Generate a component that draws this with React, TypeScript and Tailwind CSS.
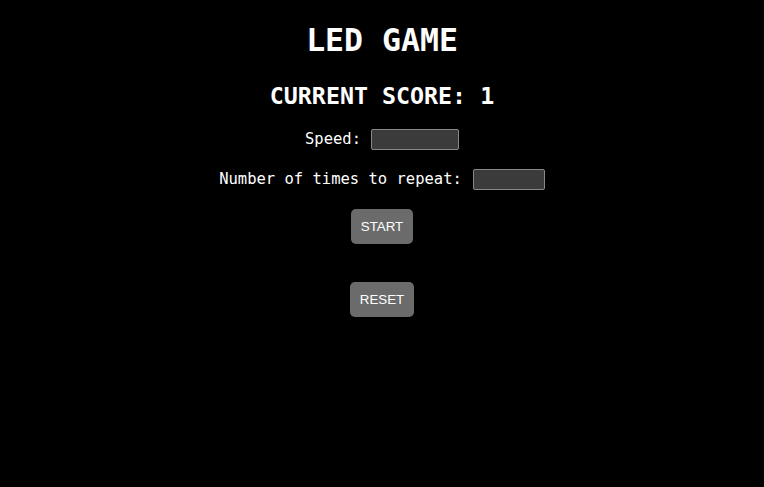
export default function App() {
  return (
    <div className="min-h-[487px] w-full bg-black text-white flex flex-col items-center" style={{ fontFamily: '"DejaVu Sans Mono", monospace' }}>
      <h1 className="mt-[21px] text-[31.5px] leading-[38px] font-bold">LED GAME</h1>
      <h2 className="mt-[23px] text-[23.3px] leading-[28px] font-bold">CURRENT SCORE: 1</h2>
      <div className="mt-[19px] flex items-center h-[21px] text-[15.5px]">
        <span>Speed:</span>
        <span className="inline-block w-[10px]" />
        <div className="w-[88px] h-[21px] bg-[#3b3b3b] border border-[#888] rounded-[2px]" />
      </div>
      <div className="mt-[19px] flex items-center h-[21px] text-[15.5px]">
        <span>Number of times to repeat:</span>
        <span className="inline-block w-[11px]" />
        <div className="w-[72px] h-[21px] bg-[#3b3b3b] border border-[#888] rounded-[2px]" />
      </div>
      <button className="mt-[19px] w-[62px] h-[35px] bg-[#6b6b6b] rounded-[5px] text-[13.33px] text-white" style={{ fontFamily: '"Liberation Sans", Arial, sans-serif' }}>START</button>
      <button className="mt-[38px] w-[64px] h-[35px] bg-[#6b6b6b] rounded-[5px] text-[13.33px] text-white" style={{ fontFamily: '"Liberation Sans", Arial, sans-serif' }}>RESET</button>
    </div>
  );
}
